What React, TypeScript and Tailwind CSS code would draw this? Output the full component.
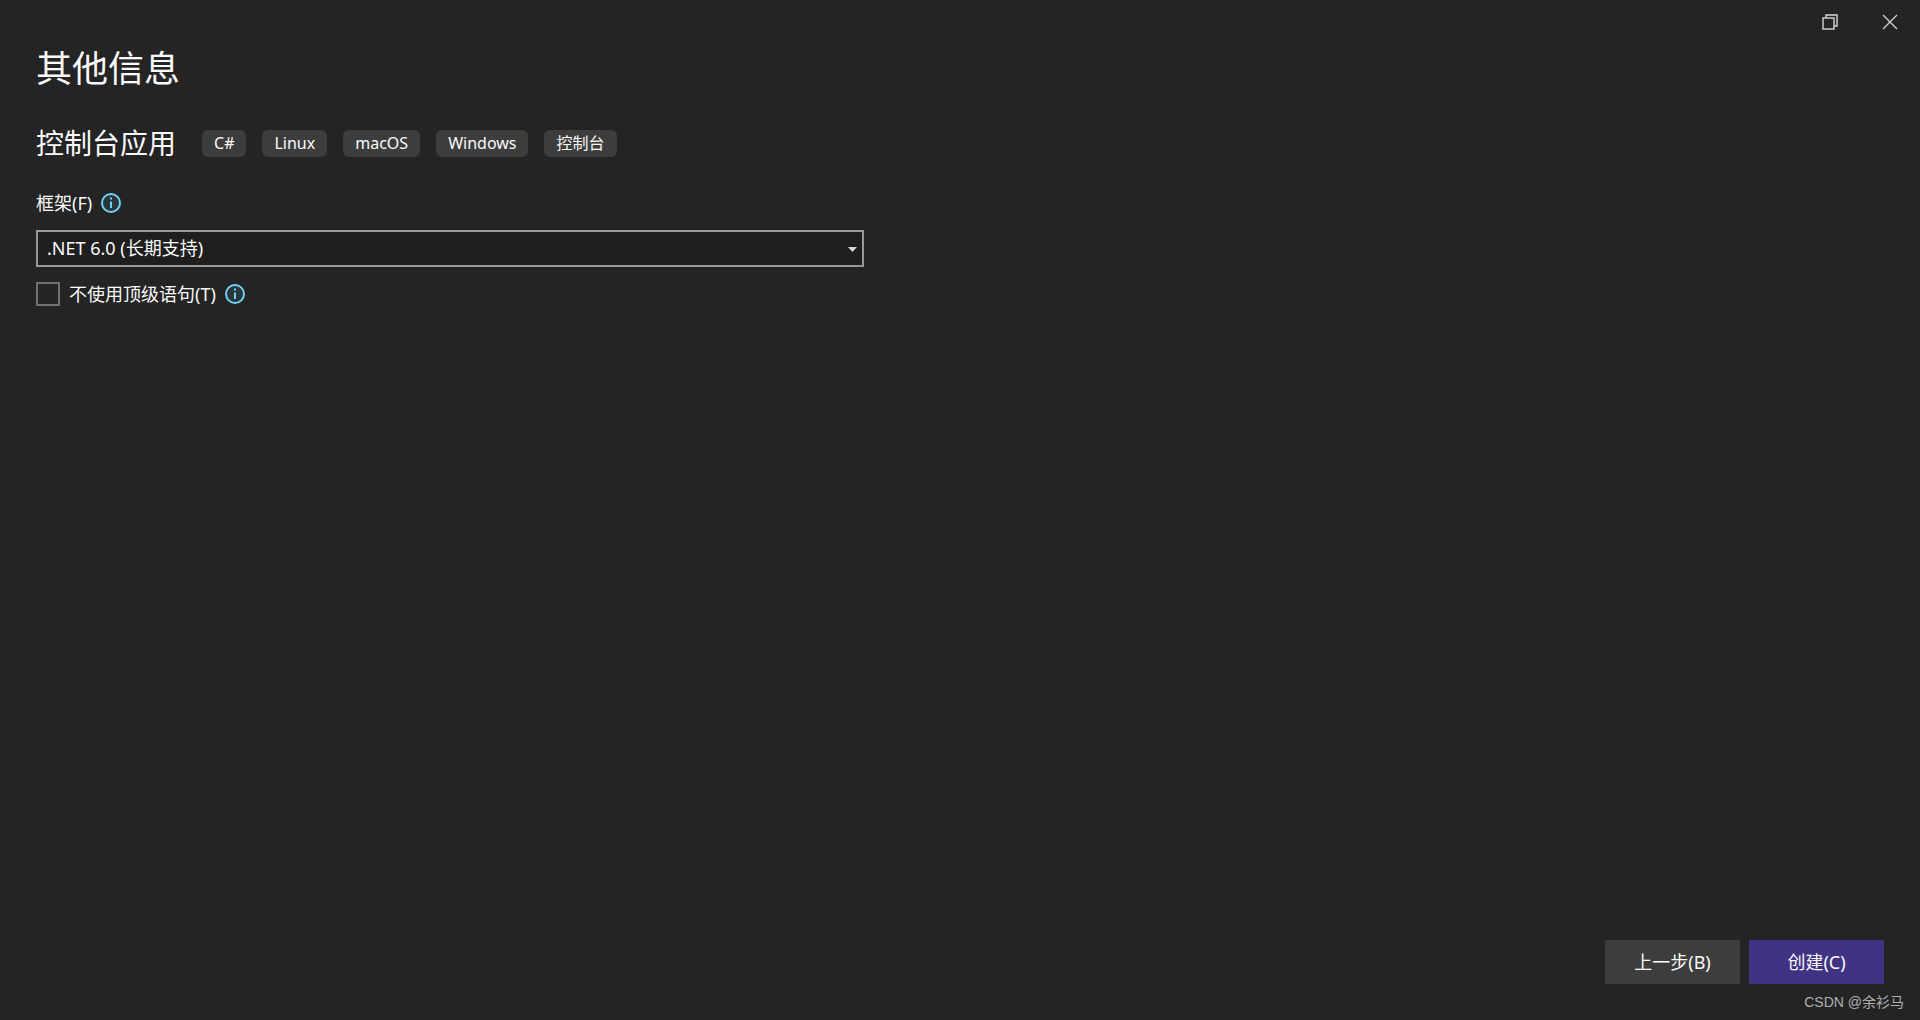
import React from "react";

const tags = ["C#", "Linux", "macOS", "Windows", "控制台"];

function InfoIcon({ label }: { label: string }) {
  return (
    <svg width="20" height="20" viewBox="0 0 20 20" role="img" aria-label={label} className="shrink-0">
      <circle cx="10" cy="10" r="9" fill="#2b363b" stroke="#6fd3f7" strokeWidth="2" />
      <rect x="9" y="8.5" width="2" height="6.5" fill="#6fd3f7" />
      <rect x="9" y="4.5" width="2" height="2" fill="#6fd3f7" />
    </svg>
  );
}

export default function App() {
  return (
    <div className="flex min-h-screen flex-col bg-[#242424] font-['Noto_Sans','Noto_Sans_CJK_SC',sans-serif] text-lg leading-6 text-[#fafafa]">
      <header className="flex h-11 justify-end">
        <button type="button" aria-label="还原" className="flex w-15 items-center justify-center">
          <svg width="16" height="16" viewBox="0 0 16 16" fill="none" stroke="#d6d6d6" strokeWidth="1.4">
            <rect x="1" y="4" width="11" height="11" />
            <path d="M4 4V1h11v11h-3" />
          </svg>
        </button>
        <button type="button" aria-label="关闭" className="flex w-15 items-center justify-center">
          <svg width="16" height="16" viewBox="0 0 16 16" fill="none" stroke="#d6d6d6" strokeWidth="1.3">
            <path d="M1 1l14 14M15 1L1 15" />
          </svg>
        </button>
      </header>

      <main className="flex-1 px-9">
        <h1 className="pt-px text-4xl leading-12">其他信息</h1>
        <section className="mt-[26px] flex items-center">
          <h2 className="mr-[26px] text-[28px] leading-12">控制台应用</h2>
          <ul className="flex gap-4 text-base">
            {tags.map((tag) => (
              <li key={tag} className="flex h-[27px] items-center rounded-md bg-[#3d3d3d] px-3">
                {tag}
              </li>
            ))}
          </ul>
        </section>

        <div className="mt-6 flex items-center gap-[9px]">
          <label htmlFor="framework">框架(F)</label>
          <InfoIcon label="框架信息" />
        </div>
        <div className="relative mt-[15px] w-[828px] max-w-full">
          <select
            id="framework"
            className="block h-[37px] w-full appearance-none border-2 border-[#999999] bg-[#1f1f1f] pr-8 pb-0.5 pl-[9px]"
          >
            <option>.NET 6.0 (长期支持)</option>
          </select>
          <svg
            width="9"
            height="5"
            viewBox="0 0 9 5"
            className="pointer-events-none absolute top-[17px] right-[7px]"
          >
            <path d="M0 0h9L4.500 5z" fill="#d6d6d6" />
          </svg>
        </div>
        <div className="mt-[15px] flex items-center gap-[9px]">
          <input
            id="top-level"
            type="checkbox"
            className="size-6 appearance-none border-2 border-[#717171] bg-[#242424] checked:bg-[#413384]"
          />
          <label htmlFor="top-level">不使用顶级语句(T)</label>
          <InfoIcon label="顶级语句信息" />
        </div>
      </main>

      <footer>
        <div className="flex justify-end gap-[9px] px-9">
          <button type="button" className="h-11 w-[135px] bg-[#3d3d3d]">
            上一步(B)
          </button>
          <button type="button" className="h-11 w-[135px] bg-[#413384]">
            创建(C)
          </button>
        </div>
        <p className="flex h-9 items-center justify-end pr-4 font-['Liberation_Sans','Noto_Sans_CJK_SC',sans-serif] text-sm text-[#b0b0b0]">
          CSDN @余衫马
        </p>
      </footer>
    </div>
  );
}
